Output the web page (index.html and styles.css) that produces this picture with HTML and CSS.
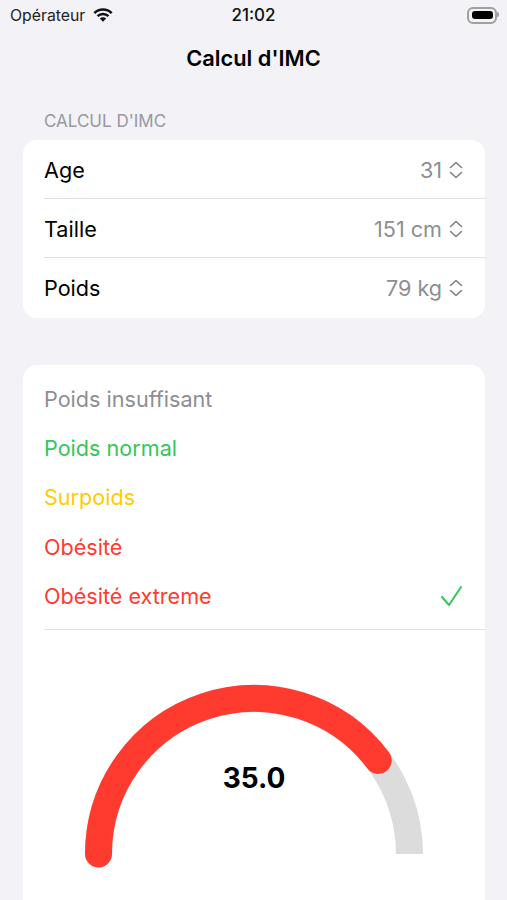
FILE: index.html
```html
<!DOCTYPE html>
<html lang="fr">
<head>
    <meta charset="UTF-8">
    <meta name="viewport" content="width=device-width, initial-scale=1.0">
    <title>Calcul d'IMC</title>
    <link rel="stylesheet" href="styles.css">
</head>
<body>
    <header class="status-bar">
        <div class="carrier">
            <span>Opérateur</span>
            <svg class="wifi" width="20" height="15" viewBox="0 0 20 15">
                <path d="M.45 4.15A13.500 13.500 0 0 1 19.550 4.150L17.780 5.920A11 11 0 0 0 2.220 5.920Z"/>
                <path d="M3.640 7.340A9 9 0 0 1 16.360 7.340L14.600 9.100A6.500 6.500 0 0 0 5.400 9.100Z"/>
                <path d="M6.820 10.520A4.500 4.500 0 0 1 13.180 10.520L10 13.700Z"/>
            </svg>
        </div>
        <div class="clock">21:02</div>
        <div class="battery"><span class="battery-level"></span></div>
    </header>

    <h1 class="nav-title">Calcul d'IMC</h1>

    <main class="content">
        <h2 class="section-title">CALCUL D'IMC</h2>
        <section class="card">
            <div class="row">
                <span>Age</span>
                <span class="picker">31
                    <svg class="chevrons" width="14" height="20" viewBox="0 0 14 20"><path d="M1.500 7.500 7 2.500l5.500 5M1.500 12.500 7 17.500l5.500-5"/></svg>
                </span>
            </div>
            <div class="row">
                <span>Taille</span>
                <span class="picker">151 cm
                    <svg class="chevrons" width="14" height="20" viewBox="0 0 14 20"><path d="M1.500 7.500 7 2.500l5.500 5M1.500 12.500 7 17.500l5.500-5"/></svg>
                </span>
            </div>
            <div class="row">
                <span>Poids</span>
                <span class="picker">79 kg
                    <svg class="chevrons" width="14" height="20" viewBox="0 0 14 20"><path d="M1.500 7.500 7 2.500l5.500 5M1.500 12.500 7 17.500l5.500-5"/></svg>
                </span>
            </div>
        </section>

        <section class="card card-result">
            <ul class="levels">
                <li class="level grey">Poids insuffisant</li>
                <li class="level green">Poids normal</li>
                <li class="level yellow">Surpoids</li>
                <li class="level red">Obésité</li>
                <li class="level red">Obésité extreme
                    <svg class="check" width="24" height="24" viewBox="0 0 24 24"><path d="M4 13l7 8L23 3"/></svg>
                </li>
            </ul>
            <div class="gauge">
                <svg width="462" height="300" viewBox="0 0 462 300">
                    <path class="gauge-track" d="M75.500 224a155.500 155.500 0 0 1 311 0"/>
                    <path class="gauge-value" d="M75.500 224a155.500 155.500 0 0 1 279.700-93.600"/>
                    <text class="gauge-label" x="231" y="158" text-anchor="middle">35.0</text>
                </svg>
            </div>
        </section>
    </main>
</body>
</html>
```
FILE: styles.css
```css
* {
    margin: 0;
    padding: 0;
    box-sizing: border-box;
}

body {
    font-family: Inter, 'Liberation Sans', sans-serif;
    background: #f2f2f7;
    color: #000;
    height: 900px;
    overflow: hidden;
}

/* Status bar */
.status-bar {
    display: grid;
    grid-template-columns: 1fr auto 1fr;
    align-items: center;
    height: 30px;
    padding: 0 10px 0 10px;
}

.carrier {
    display: flex;
    align-items: center;
    gap: 8px;
    font-size: 15.8px;
    color: #222;
}

.wifi {
    fill: #111;
}

.clock {
    font-size: 17px;
    font-weight: 500;
    color: #111;
}

.battery {
    position: relative;
    justify-self: end;
    width: 30px;
    height: 17px;
    padding: 2.5px;
    border: 2px solid #a0a0a0;
    border-radius: 6px;
}

/* little nub on the right of the battery */
.battery::after {
    content: "";
    position: absolute;
    top: 3px;
    right: -4px;
    width: 2px;
    height: 5px;
    background: #a0a0a0;
    border-radius: 0 2px 2px 0;
}

.battery-level {
    display: block;
    height: 100%;
    background: #000;
    border-radius: 3px;
}

/* Navigation */
.nav-title {
    font-size: 21.8px;
    font-weight: 600;
    line-height: 28px;
    text-align: center;
    margin-top: 14px;
}

.content {
    padding: 0 22px 0 23px;
}

.section-title {
    font-size: 17px;
    font-weight: 400;
    line-height: 20px;
    color: #98989d;
    margin: 39px 0 9px 21px;
}

/* Cards */
.card {
    background: #fff;
    border-radius: 14px;
    overflow: hidden;
}

.row {
    display: flex;
    justify-content: space-between;
    align-items: center;
    height: 59px;
    margin-left: 21px;
    padding: 1px 22px 0 0;
    font-size: 21.6px;
    border-bottom: 1px solid #e2e2e5;
}

.row:last-child {
    height: 60px;
    padding-top: 0;
    border-bottom: none;
}

.picker {
    display: flex;
    align-items: center;
    gap: 7px;
    color: #8e8e93;
}

.chevrons {
    fill: none;
    stroke: #808084;
    stroke-width: 1.6;
    stroke-linecap: round;
    stroke-linejoin: round;
}

.card-result {
    margin-top: 47px;
}

.levels {
    list-style: none;
    margin-left: 21px;
    padding: 9px 0 9px;
    border-bottom: 1px solid #e2e2e5;
}

.level {
    display: flex;
    justify-content: space-between;
    align-items: center;
    height: 49.3px;
    padding-right: 23px;
    font-size: 21.6px;
}

.grey { color: #8e8e93; }
.green { color: #34c759; }
.yellow { color: #ffcc00; }
.red { color: #ff3b30; }

.check {
    fill: none;
    stroke: #34c759;
    stroke-width: 2;
    stroke-linecap: round;
    stroke-linejoin: round;
}

/* Gauge */
.gauge svg {
    display: block;
}

.gauge-track,
.gauge-value {
    fill: none;
    stroke-width: 27;
}

.gauge-track {
    stroke: #dcdcdc;
}

.gauge-value {
    stroke: #ff3b30;
    stroke-linecap: round;
}

.gauge-label {
    font-size: 28px;
    font-weight: 700;
    fill: #000;
}
```
